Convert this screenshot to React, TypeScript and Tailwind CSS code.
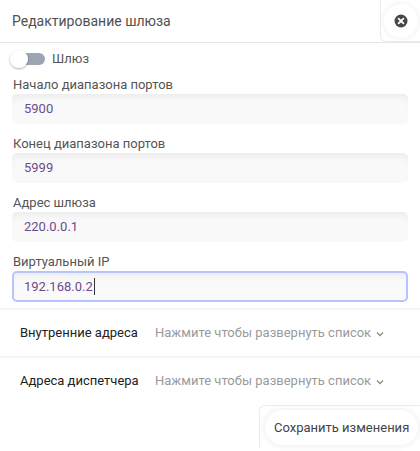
import React, { useState } from "react";

const fields = [
  { label: "Начало диапазона портов", value: "5900" },
  { label: "Конец диапазона портов", value: "5999" },
  { label: "Адрес шлюза", value: "220.0.0.1" },
  { label: "Виртуальный IP", value: "192.168.0.2", focused: true },
];

const lists = ["Внутренние адреса", "Адреса диспетчера"];

const App: React.FC = () => {
  const [enabled, setEnabled] = useState<boolean>(false);

  return (
    <div className="w-[420px] h-[451px] bg-white overflow-hidden font-['Roboto',sans-serif] text-[13px] text-[#555]">
      {/* header */}
      <div className="flex items-center justify-between h-[43px] border-b border-[#e6e6e6]">
        <h1 className="pl-3 text-[14px] text-[#505050]">Редактирование шлюза</h1>
        <div className="self-start flex items-center justify-center w-10 h-[42px] border-l border-b border-[#ececec] rounded-bl-md">
          <button className="flex items-center justify-center w-[34px] h-[34px] rounded-full bg-white shadow-[0_0_6px_rgba(0,0,0,0.08)]">
            <svg width="14" height="14" viewBox="0 0 14 14">
              <circle cx="7" cy="7" r="6.5" fill="#474747" />
              <path d="M4.6 4.6 L9.4 9.4 M9.4 4.6 L4.6 9.4" stroke="#fff" strokeWidth="1.8" strokeLinecap="round" />
            </svg>
          </button>
        </div>
      </div>

      {/* toggle */}
      <div className="flex items-center pl-[8px] mt-[6px] h-[20px]">
        <svg
          onClick={() => setEnabled(!enabled)}
          className="shrink-0 cursor-pointer"
          width="38"
          height="22"
          viewBox="0 0 38 22"
        >
          <defs>
            <filter id="knob" x="-50%" y="-50%" width="200%" height="200%">
              <feDropShadow dx="0" dy="1" stdDeviation="1.2" floodColor="#000" floodOpacity="0.35" />
            </filter>
          </defs>
          <rect x="10" y="5" width="27" height="12" rx="6" fill="#9ca6b3" />
          <circle cx="11" cy="11" r="9" fill="#fff" filter="url(#knob)" />
        </svg>
        <span className="ml-[6px] text-[#555]">Шлюз</span>
      </div>

      {/* fields */}
      <div className="flex flex-col px-3 mt-[6px]">
        {fields.map((f) => (
          <div key={f.label} className="flex flex-col mb-[10px]">
            <label className="pl-px leading-[19px] text-[#555]">{f.label}</label>
            <div
              className={
                f.focused
                  ? "flex items-center h-[31px] rounded-[5px] border-2 border-[#b6c4ff] bg-[#fafafa] pl-[10px] shadow-[inset_0_7px_9px_-5px_rgba(0,0,0,0.07)]"
                  : "flex items-center h-[30px] rounded-[5px] bg-[#f9f9f9] pl-3 shadow-[inset_0_7px_9px_-5px_rgba(0,0,0,0.07)]"
              }
            >
              <span className="text-[#6d4a8c]">{f.value}</span>
              {f.focused && <span className="w-px h-[17px] bg-[#333] ml-px" />}
            </div>
          </div>
        ))}
      </div>

      {/* list rows */}
      <div className="flex flex-col -mt-[4px]">
        {lists.map((name) => (
          <div key={name} className="flex items-center h-[48px] pl-5 border-t-2 border-[#f5f5f5]">
            <span className="text-[#222] w-[135px]">{name}</span>
            <span className="text-[#9a9a9a]">Нажмите чтобы развернуть список</span>
            <svg className="ml-[5px] mt-px" width="8" height="6" viewBox="0 0 8 6">
              <path d="M1 1.5 L4 4.5 L7 1.5" stroke="#8a8a8a" strokeWidth="1.3" fill="none" />
            </svg>
          </div>
        ))}
      </div>

      {/* footer */}
      <div className="flex justify-end">
        <div className="w-[161px] h-[44px] mt-[1px] border-l border-t border-[#ececec] rounded-tl-md flex items-center pl-[5px]">
          <button className="h-[35px] px-[9px] rounded-full bg-white shadow-[0_0_7px_rgba(0,0,0,0.09)] text-[#444]">
            Сохранить изменения
          </button>
        </div>
      </div>
    </div>
  );
};

export default App;
